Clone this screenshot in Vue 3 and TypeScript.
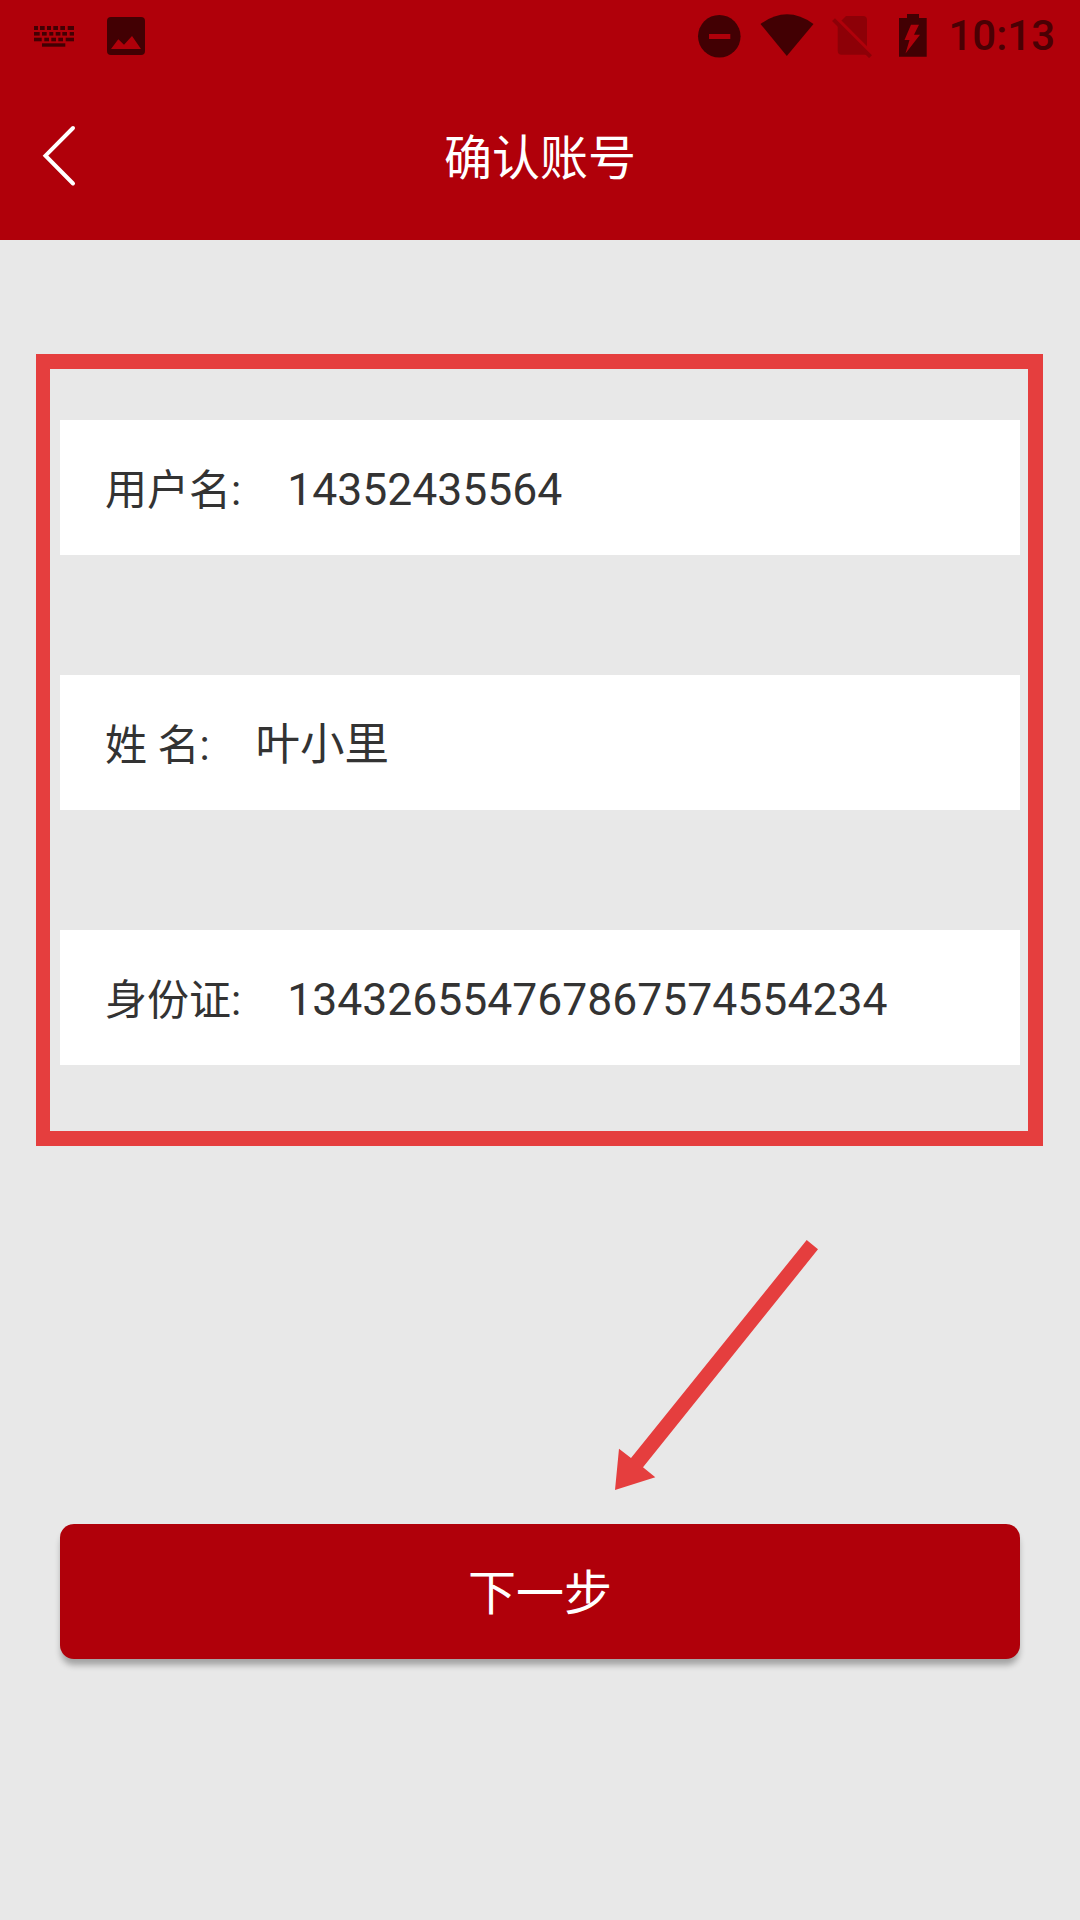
<script setup lang="ts">
interface Row { label: string; value: string }
const rows: Row[] = [
  { label: '用户名:', value: '14352435564' },
  { label: '姓 名:', value: '叶小里' },
  { label: '身份证:', value: '134326554767867574554234' },
]
</script>

<template>
  <div class="page">
    <header class="header">
      <div class="status">
        <div class="status-left">
          <svg class="ic" width="40" height="44" viewBox="34 14 40 44">
            <g fill="#420003">
              <rect x="34" y="26" width="4" height="4" /><rect x="40" y="26" width="4.7" height="4" /><rect x="47" y="26" width="4" height="4" /><rect x="53.3" y="26" width="4.7" height="4" /><rect x="60.3" y="26" width="4.7" height="4" /><rect x="67.7" y="26" width="6.3" height="4" />
              <rect x="34" y="32" width="5.7" height="3.6" /><rect x="42" y="32" width="4.7" height="3.6" /><rect x="49.3" y="32" width="4" height="3.6" /><rect x="55.7" y="32" width="4.7" height="3.6" /><rect x="62.3" y="32" width="4.7" height="3.6" /><rect x="69.7" y="32" width="4.3" height="3.6" />
              <rect x="34" y="37.7" width="7.7" height="3.6" /><rect x="44.3" y="37.7" width="4.7" height="3.6" /><rect x="51.3" y="37.7" width="4.7" height="3.6" /><rect x="58.3" y="37.7" width="4.7" height="3.6" /><rect x="65.7" y="37.7" width="8.3" height="3.6" />
              <rect x="42" y="43.3" width="23.3" height="3.4" />
            </g>
          </svg>
          <svg class="ic" width="38" height="44" viewBox="107 14 38 44">
            <rect x="107" y="17" width="38" height="38" rx="4" fill="#420003" />
            <path d="M111 49L118.3 39.3L124 44.7L132 36L141 49Z" fill="#b0000a" />
          </svg>
        </div>
        <div class="status-right">
          <svg class="ic" width="44" height="44" viewBox="697 14 44 44">
            <circle cx="719.3" cy="36.3" r="21.3" fill="#420003" />
            <rect x="709" y="34" width="21.3" height="5" fill="#b0000a" />
          </svg>
          <svg class="ic wifi" width="54" height="44" viewBox="760.5 14 54 44">
            <path d="M761 24Q787.5 4.6 814 24L787.3 56Z" fill="#420003" />
          </svg>
          <svg class="ic sim" width="40" height="44" viewBox="832 14 40 44">
            <path d="M846 16H863A4 4 0 0 1 867 20V54.7H841.7A4 4 0 0 1 837.7 50.700V24.3Z" fill="#8d0007" />
            <path d="M836.500 18.500L872 54" stroke="#b0000a" stroke-width="4" />
            <path d="M833.500 19.700L870.500 56.700" stroke="#8d0007" stroke-width="4" />
          </svg>
          <svg class="ic batt" width="28" height="44" viewBox="899 14 28 44">
            <path d="M907 14H919V18H926.700V56.800H899V18H907Z" fill="#420003" />
            <path d="M911 24.700H919L914 34.700H920L905.500 53.500L909.500 40H904.500Z" fill="#b0000a" />
          </svg>
          <span class="time">10:13</span>
        </div>
      </div>
      <div class="toolbar">
        <svg class="back" width="36" height="64" viewBox="42 124 36 64">
          <path d="M73 128L45.500 155.700L73 183.500" fill="none" stroke="#fff" stroke-width="4" stroke-linecap="round" />
        </svg>
        <h1 class="title">确认账号</h1>
      </div>
    </header>

    <main class="body">
      <div class="frame"></div>
      <div class="rows">
        <div v-for="row in rows" :key="row.label" class="row">
          <span class="label">{{ row.label }}</span>
          <span class="value">{{ row.value }}</span>
        </div>
      </div>
      <button class="next" type="button">下一步</button>
      <svg class="arrow" width="210" height="260" viewBox="610 1235 210 260">
        <path d="M806.700 1240L818 1249.300L643 1467.300L655.300 1477.300L615 1490L619 1448.700L631 1458Z" fill="#e53e3e" />
      </svg>
    </main>
  </div>
</template>

<style scoped>
.page {
  width: 1080px;
  height: 1920px;
  background: #e8e8e8;
  font-family: Roboto, "Noto Sans CJK SC", sans-serif;
  overflow: hidden;
}
.header {
  background: #b0000a;
  height: 240px;
}
.status {
  height: 72px;
  display: flex;
  align-items: center;
  justify-content: space-between;
  padding: 0 25px 0 34px;
}
.status-left {
  display: flex;
  align-items: center;
  gap: 33px;
}
.status-right {
  display: flex;
  align-items: center;
}
.ic {
  display: block;
}
.wifi {
  margin-left: 19px;
}
.sim {
  margin-left: 18px;
}
.batt {
  margin-left: 27px;
}
.time {
  margin-left: 21px;
  font-size: 42px;
  font-weight: 500;
  color: #4a0004;
  line-height: 44px;
}
.toolbar {
  height: 168px;
  display: flex;
  align-items: center;
  justify-content: center;
  position: relative;
}
.back {
  position: absolute;
  left: 42px;
  top: 52px;
}
.title {
  margin: 0 0 5px;
  font-size: 48px;
  font-weight: 400;
  color: #fff;
}
.body {
  position: relative;
  padding: 180px 60px 0;
}
.frame {
  position: absolute;
  left: 36px;
  top: 114px;
  width: 1007px;
  height: 792px;
  box-sizing: border-box;
  border: 15px solid #e53e3e;
  border-left-width: 14px;
}
.rows {
  position: relative;
  display: flex;
  flex-direction: column;
  gap: 120px;
}
.row {
  height: 135px;
  background: #fff;
  display: flex;
  align-items: baseline;
  padding: 39.500px 0 0 45px;
  box-sizing: border-box;
  color: #333;
  line-height: 60px;
}
.label {
  font-size: 42px;
  margin-right: 46px;
}
.value {
  font-size: 44.5px;
}
.next {
  display: block;
  width: 100%;
  height: 135px;
  margin-top: 459px;
  padding: 0 0 5px;
  border: 0;
  border-radius: 14px;
  background: #b0000a;
  color: #fff;
  font-family: inherit;
  font-size: 48px;
  box-shadow: 0 7px 6px -1px rgba(0, 0, 0, 0.3);
}
.arrow {
  position: absolute;
  left: 610px;
  top: 995px;
}
</style>
